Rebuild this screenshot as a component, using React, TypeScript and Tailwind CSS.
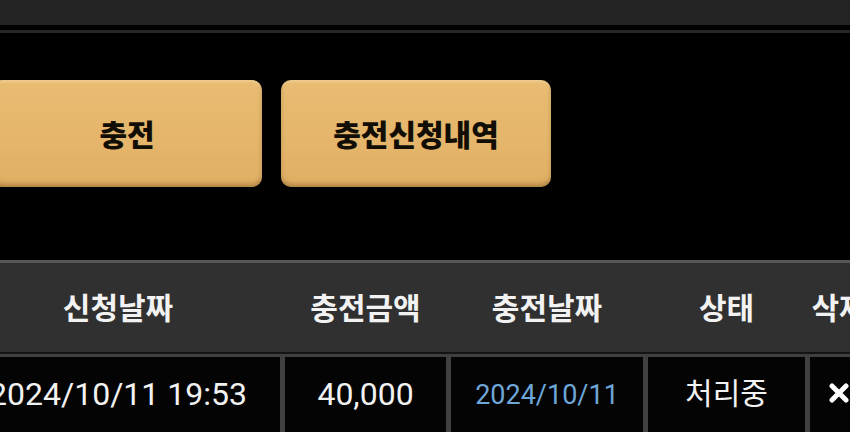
import React from "react";

const font = { fontFamily: 'Roboto, "Noto Sans CJK KR", sans-serif' };

const cols = "grid grid-cols-[324px_161px_192px_157px_58px] gap-x-[5px]";

function HeaderCell({ children }: { children: React.ReactNode }) {
  return (
    <div className="flex items-center justify-center pt-[2px] text-[30px] font-bold text-[#f2f2f2] whitespace-nowrap">
      {children}
    </div>
  );
}

function BodyCell({ children, className = "" }: { children: React.ReactNode; className?: string }) {
  return (
    <div className={`flex items-start justify-center bg-[#040404] h-[80px] whitespace-nowrap ${className}`}>
      {children}
    </div>
  );
}

function GoldButton({ label }: { label: string }) {
  return (
    <button className="w-[270px] h-[107px] shrink-0 rounded-[10px] bg-[linear-gradient(180deg,#e9bc73_0%,#e4b56a_60%,#dfae62_100%)] shadow-[inset_0_-3px_4px_rgba(90,55,10,0.35),inset_0_2px_3px_rgba(255,240,200,0.35)] flex items-center justify-center pt-[3px] text-[30px] font-black text-[#120e06]">
      {label}
    </button>
  );
}

export default function App() {
  return (
    <div className="w-[850px] h-[432px] bg-black overflow-hidden flex flex-col" style={font}>
      <div className="h-[25px] bg-[#232323] shrink-0" />
      <div className="mt-[5px] h-[3px] bg-[#262626] shrink-0" />

      <div className="mt-[47px] ml-[-8px] flex gap-[19px] shrink-0">
        <GoldButton label="충전" />
        <GoldButton label="충전신청내역" />
      </div>

      <div className="mt-[73px] ml-[-44px] w-[900px] shrink-0">
        <div className="h-[3px] bg-[#575757]" />
        <div className={`${cols} h-[89px] bg-[#303030]`}>
          <HeaderCell>신청날짜</HeaderCell>
          <HeaderCell>충전금액</HeaderCell>
          <HeaderCell>충전날짜</HeaderCell>
          <HeaderCell>상태</HeaderCell>
          <HeaderCell>삭제</HeaderCell>
        </div>
        <div className="h-[2px] bg-[#141414]" />
        <div className="bg-[#404040] pt-[3px]">
          <div className={cols}>
            <BodyCell className="pt-[13px] text-[32px] text-[#f2f2f2]">2024/10/11 19:53</BodyCell>
            <BodyCell className="pt-[13px] text-[32px] text-[#f2f2f2]">40,000</BodyCell>
            <BodyCell className="pt-[18px] text-[27px] text-[#6ea6d8]">2024/10/11</BodyCell>
            <BodyCell className="pt-[14px] text-[30px] text-[#f2f2f2]">처리중</BodyCell>
            <BodyCell className="pt-[26px]">
              <svg width="20" height="20" viewBox="0 0 20 20">
                <path d="M3 3 L17 17 M17 3 L3 17" stroke="#ffffff" strokeWidth="5" strokeLinecap="round" />
              </svg>
            </BodyCell>
          </div>
        </div>
      </div>
    </div>
  );
}
